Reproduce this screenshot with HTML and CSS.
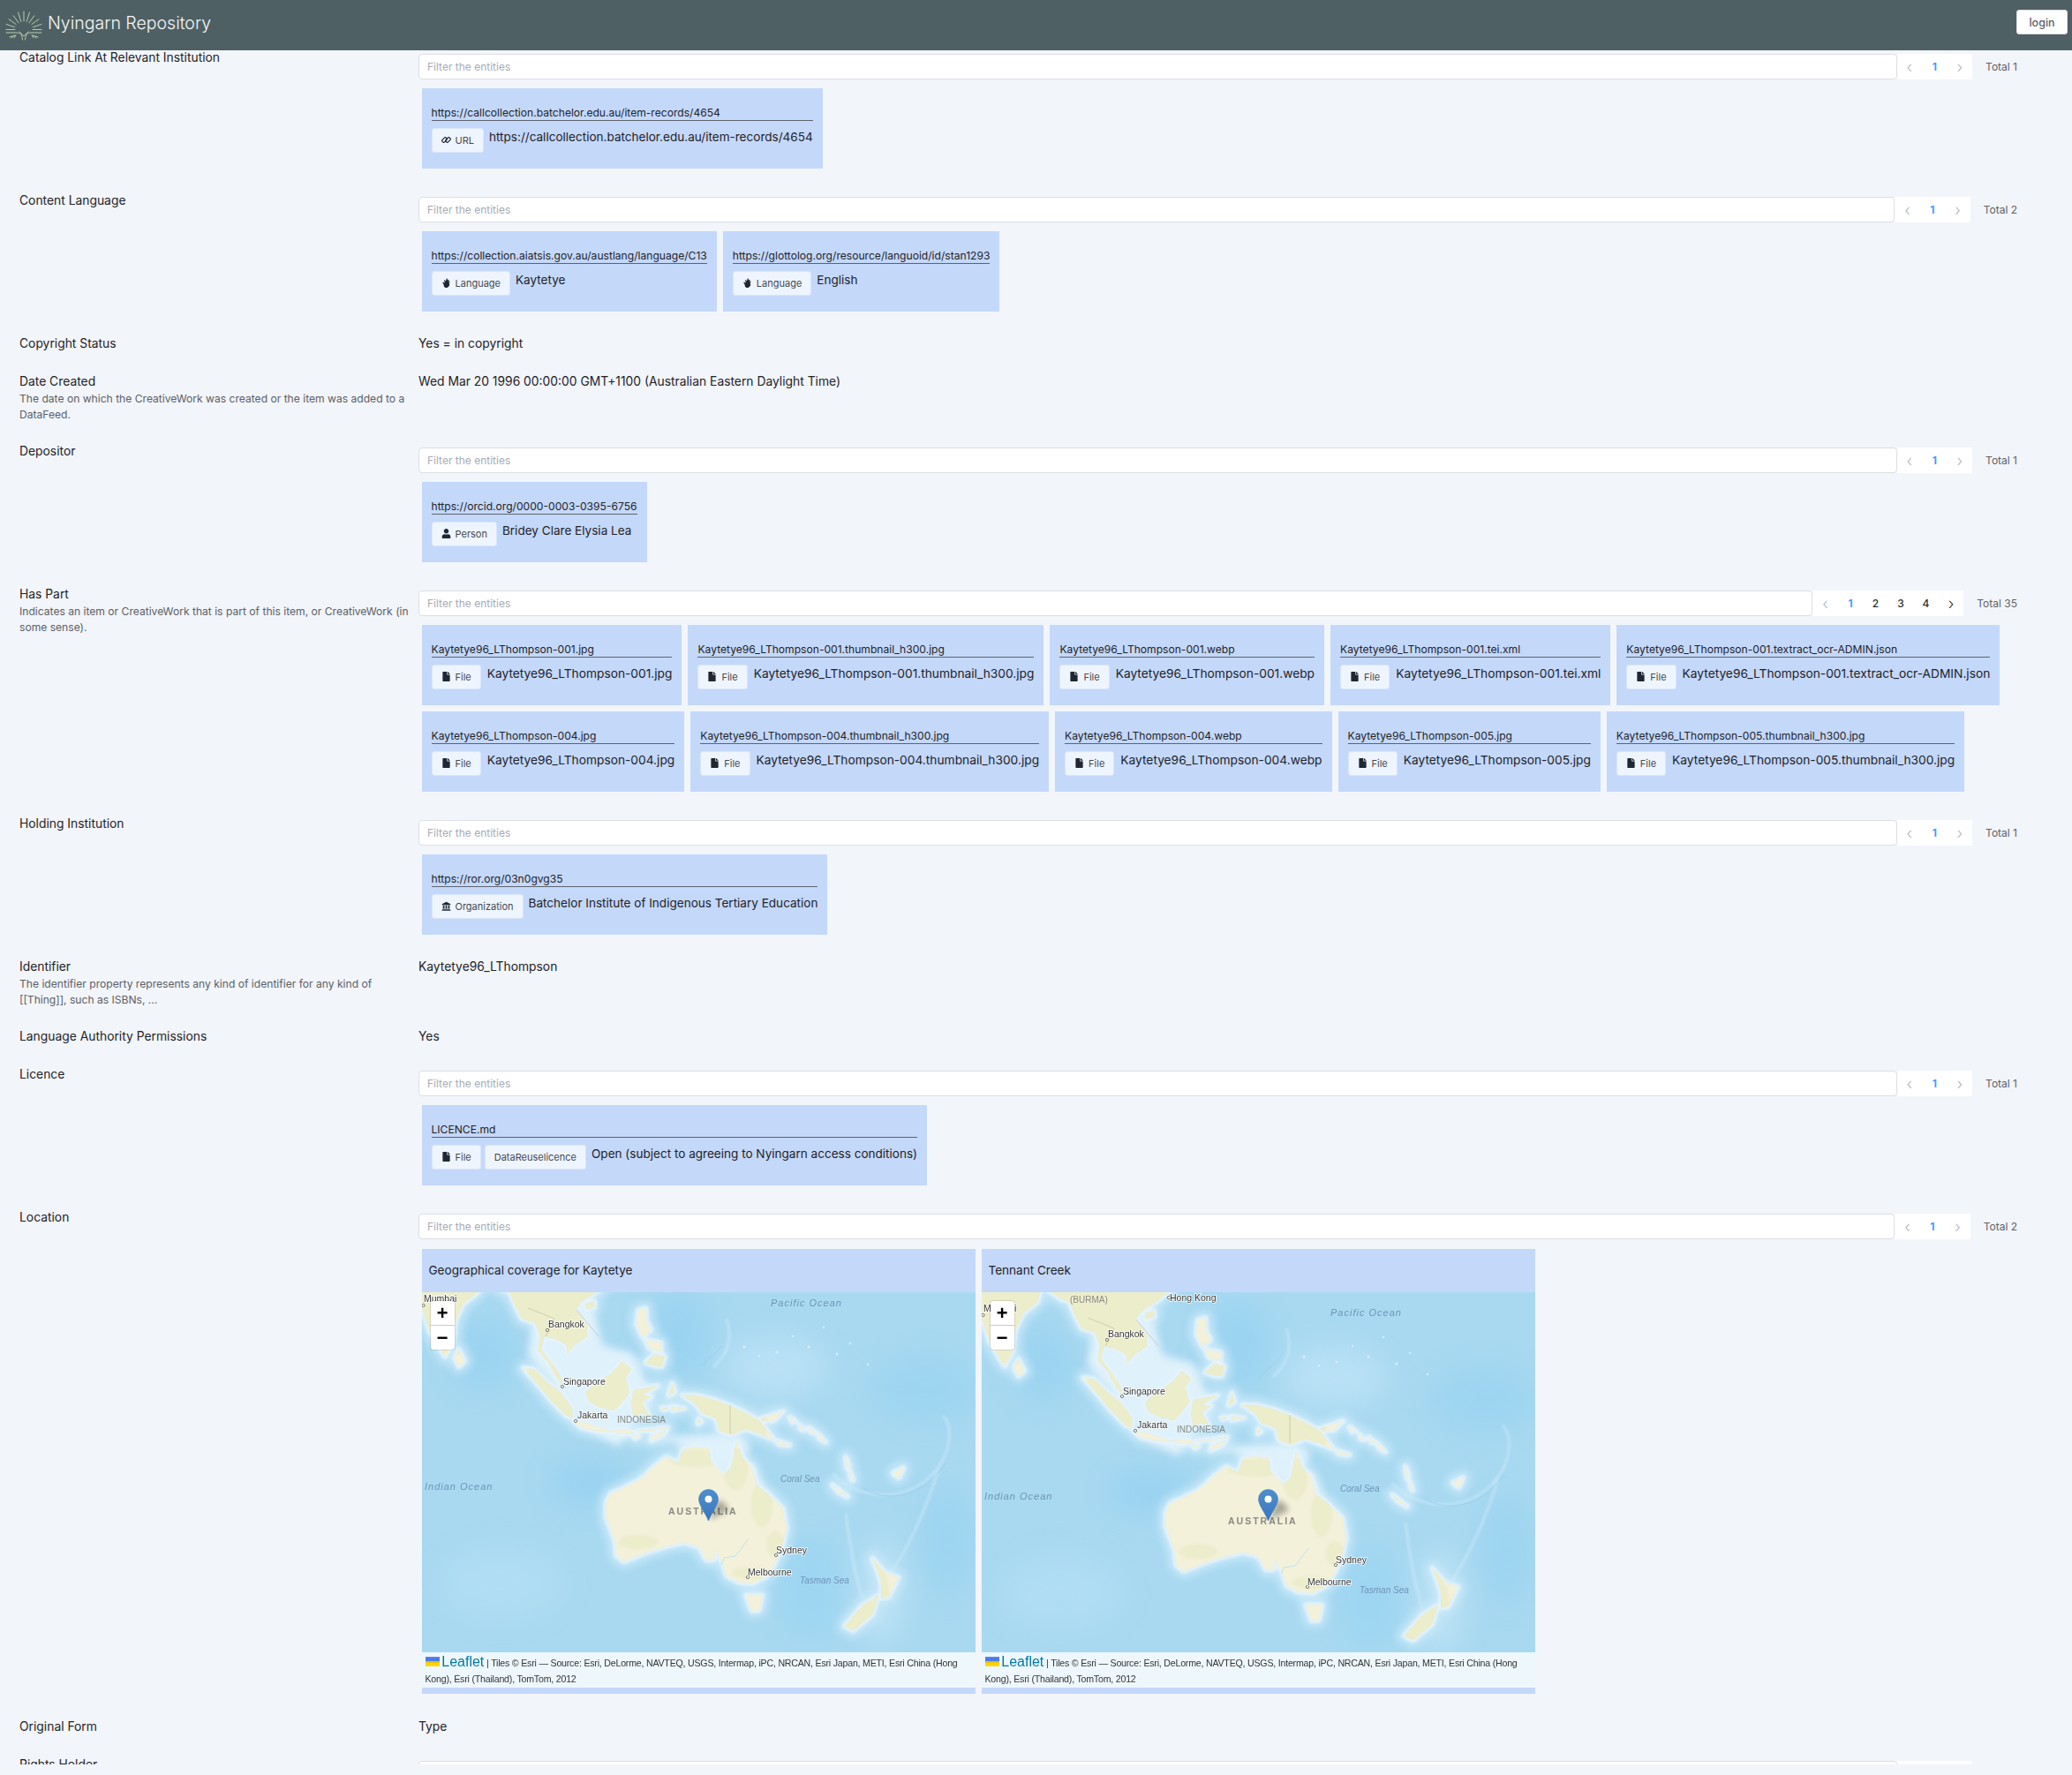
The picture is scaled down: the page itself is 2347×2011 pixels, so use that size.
FILE: index.html
```html
<!DOCTYPE html>
<html lang="en">
<head>
    <meta charset="UTF-8">
    <meta name="viewport" content="width=device-width, initial-scale=1.0">
    <title>Nyingarn Repository</title>
    <link rel="stylesheet" href="styles.css">
</head>
<body>
    <svg class="icon-defs" aria-hidden="true">
        <defs>
        <symbol id="i-file" viewBox="0 0 384 512"><path d="M224 136V0H24C10.7 0 0 10.7 0 24v464c0 13.3 10.7 24 24 24h336c13.3 0 24-10.7 24-24V160H248c-13.2 0-24-10.8-24-24zm160-14.1v6.1H256V0h6.1c6.4 0 12.5 2.5 17 7l97.9 98c4.5 4.5 7 10.6 7 16.9z"/></symbol>
        <symbol id="i-user" viewBox="0 0 448 512"><path d="M224 256c70.7 0 128-57.3 128-128S294.7 0 224 0 96 57.3 96 128s57.3 128 128 128zm89.6 32h-16.7c-22.2 10.2-46.9 16-72.9 16s-50.6-5.8-72.9-16h-16.7C60.2 288 0 348.2 0 422.4V464c0 26.5 21.5 48 48 48h352c26.5 0 48-21.5 48-48v-41.6c0-74.2-60.2-134.4-134.4-134.4z"/></symbol>
        <symbol id="i-link" viewBox="0 0 16 16"><g fill="none" stroke="currentColor" stroke-width="1.7"><rect x="0.6" y="5.4" width="9" height="5.4" rx="2.7" transform="rotate(-45 5 8)"/><rect x="6.4" y="5.2" width="9" height="5.4" rx="2.7" transform="rotate(-45 11 8)"/></g></symbol>
        <symbol id="i-lang" viewBox="0 0 16 16"><path d="M8.500 .5l1.500 1-.5 2 2-1 1 1.200-1.200 1.800 2-.5.700 1.300-1.500 1.700 1 2.500-1 3-3 2.500H7l-2.500-1.500L3.500 10 1.800 7.500l1-1 2 1.500.7-1.500L4 4l1.200-.8L7 5z"/></symbol>
        <symbol id="i-bank" viewBox="0 0 16 16"><path d="M8 1l7 3.600V6H1V4.600zM2.500 7H5v5H2.500zM6.800 7h2.400v5H6.800zM11 7h2.500v5H11zM1.500 12.800h13V14h-13zM.8 14.500h14.400V15.500H.8z"/></symbol>

        <g id="lands">
            <g transform="scale(.3333)">
                <path d="M-10 -40L200 -40L190 0L140 40L112 100L105 170L78 218L60 190L25 130L0 55L-10 40Z"/>
                <path d="M125 195L145 235L125 252L110 222Z"/>
                <path d="M225 -40L640 -40L600 -5L545 30L522 60L560 110L562 150L520 180L495 208L490 178L455 160L415 150L405 195L445 245L472 285L478 316L455 288L430 240L410 215L395 200L402 150L385 105L340 90L318 48L298 0L270 -10Z"/>
                <path d="M555 40L585 30L586 50L560 58Z"/>
                <path d="M345 258L380 262L430 310L470 340L510 392L512 428L490 420L440 370L390 310Z"/>
                <path d="M515 438L560 445L620 465L642 476L600 472L540 460Z"/>
                <path d="M640 470L700 468L720 478L680 482ZM712 484L738 490L725 498ZM780 490L830 472L812 490L778 505ZM730 470L800 465L790 472ZM800 462L835 460L825 467Z"/>
                <path d="M555 340L580 320L620 292L650 270L680 235L712 260L692 290L705 340L672 385L650 402L600 390L565 370Z"/>
                <path d="M720 332L802 318L748 350L778 355L748 375L772 420L745 412L720 424L710 380Z"/>
                <path d="M735 62L760 55L762 100L778 128L750 152L730 110ZM760 240L790 210L825 218L815 252L790 250ZM760 162L812 172L812 200L772 190Z"/>
                <path d="M850 310L860 340L838 352ZM848 388L892 395L850 402ZM815 392L838 394L820 400ZM940 430L950 440L938 448Z"/>
                <path d="M885 350L930 350L990 365L1045 385L1100 410L1150 440L1197 502L1150 482L1100 465L1050 485L1010 470L1000 430L950 410L930 380Z"/>
                <path d="M1150 430L1228 405L1196 436L1160 438Z"/>
                <path d="M1250 425L1272 440L1258 442ZM1285 452L1300 468L1288 466ZM1315 460L1340 480L1322 476ZM1345 480L1372 510L1350 498ZM1205 505L1250 520L1215 518Z"/>
                <path d="M1440 560L1452 590L1445 600ZM1455 610L1465 640L1458 635ZM1395 655L1442 692L1410 672Z"/>
            </g>
            <g transform="translate(182 175) scale(.3333)">
                <path d="M80 190L95 160L130 145L190 115L215 95L240 70L285 35L325 55L340 10L380 0L430 5L435 50L480 95L505 70L522 -18L545 40L575 70L590 130L630 160L680 210L692 280L675 350L650 400L625 440L575 465L530 460L490 440L475 395L450 350L445 385L420 385L395 340L345 325L280 340L215 360L140 390L115 370L110 320L80 240Z"/>
                <path d="M555 505L610 505L600 555L575 558Z"/>
                <path d="M985 380L1025 425L1072 445L1040 510L1015 515L1015 465L1005 430Z"/>
                <path d="M1005 505L985 570L920 625L890 610L950 540Z"/>
                <path d="M1055 90L1090 72L1075 105Z"/>
                <path d="M855 135L900 170L870 155Z"/>
            </g>
        </g>

        <filter id="soft" x="-20%" y="-20%" width="140%" height="140%" color-interpolation-filters="sRGB"><feGaussianBlur stdDeviation="5"/></filter>
        <filter id="softer" x="-30%" y="-30%" width="160%" height="160%" color-interpolation-filters="sRGB"><feGaussianBlur stdDeviation="16"/></filter>
        <filter id="thin" x="-20%" y="-20%" width="140%" height="140%" color-interpolation-filters="sRGB"><feGaussianBlur stdDeviation="1.500"/></filter>
        <filter id="pin-shadow" x="-50%" y="-50%" width="200%" height="200%" color-interpolation-filters="sRGB"><feGaussianBlur stdDeviation="3"/></filter>
        <mask id="land-only" maskUnits="userSpaceOnUse" x="-50" y="-50" width="800" height="600"><use href="#lands" fill="#fff"/></mask>
        <linearGradient id="pin-blue" x1="0" y1="0" x2="0" y2="1"><stop offset="0" stop-color="#4f8fcd"/><stop offset="1" stop-color="#3b74bd"/></linearGradient>

        <g id="basemap">
            <rect x="0" y="-20" width="627" height="480" fill="#a8d9f1"/>
            <g filter="url(#softer)">
                <ellipse cx="70" cy="70" rx="35" ry="40" fill="#9bd3f0"/>
                <ellipse cx="290" cy="50" rx="35" ry="50" fill="#9ad3f0"/>
                <ellipse cx="570" cy="110" rx="60" ry="35" fill="#9dd4f0"/>
                <ellipse cx="190" cy="215" rx="45" ry="25" fill="#99d2f0"/>
                <ellipse cx="440" cy="335" rx="35" ry="55" fill="#9dd5f1"/>
                <ellipse cx="595" cy="280" rx="30" ry="60" fill="#9dd4f0"/>
                <ellipse cx="400" cy="85" rx="60" ry="35" fill="#b9e0f5"/>
                <ellipse cx="90" cy="330" rx="70" ry="40" fill="#b0ddf3"/>
                <ellipse cx="520" cy="340" rx="25" ry="60" fill="#bde2f5"/>
            </g>
            <use href="#lands" fill="#c6e7f8" stroke="#c6e7f8" stroke-width="50" stroke-linejoin="round" filter="url(#soft)"/>
            <path d="M130 20L190 5L205 60L240 70L262 120L222 175L180 150L145 100L120 70Z" fill="#dff1fb" filter="url(#soft)"/>
            <path d="M250 165L345 160L372 170L355 205L325 200L290 172Z" fill="#dff1fb" filter="url(#soft)"/>
            <path d="M345 190L375 195L400 250L375 230Z" fill="#dff1fb" filter="url(#soft)"/>
            <use href="#lands" fill="#e4f3fc" stroke="#e4f3fc" stroke-width="18" stroke-linejoin="round" filter="url(#thin)"/>
            <g fill="none" stroke="#cfeafa" stroke-width="3" opacity=".6" filter="url(#thin)">
                <path d="M465 205C490 235 560 245 590 190C600 170 600 150 590 140"/>
                <path d="M585 200C570 250 550 290 530 320"/>
                <path d="M480 250C485 290 490 320 500 350"/>
                <path d="M345 30C355 60 340 75 330 85"/>
            </g>
            <g fill="none" stroke="#8cc6ea" stroke-width="1" opacity=".5">
                <path d="M500 222C525 238 565 235 592 195"/>
                <path d="M340 60C332 72 322 76 315 85"/>
            </g>
            <g fill="#d9eefa">
                <circle cx="365" cy="62" r="1.500"/><circle cx="382" cy="72" r="1.200"/><circle cx="402" cy="68" r="1.500"/>
                <circle cx="420" cy="50" r="1.200"/><circle cx="438" cy="62" r="1.500"/><circle cx="455" cy="40" r="1.200"/>
                <circle cx="470" cy="70" r="1.500"/><circle cx="485" cy="58" r="1.200"/><circle cx="505" cy="82" r="1.200"/>
            </g>
            <use href="#lands" fill="#f3f1da" stroke="#dedbb5" stroke-width=".6" stroke-linejoin="round"/>
            <g mask="url(#land-only)">
                <g filter="url(#thin)" fill="#e6e9c0" opacity=".55">
                    <rect x="-10" y="-30" width="125" height="100"/>
                    <rect x="115" y="-30" width="110" height="100"/>
                    <rect x="120" y="70" width="125" height="75"/>
                    <rect x="170" y="70" width="110" height="70"/>
                    <rect x="225" y="70" width="60" height="70"/>
                    <rect x="290" y="110" width="100" height="60"/>
                    <ellipse cx="310" cy="188" rx="32" ry="10"/>
                    <ellipse cx="355" cy="200" rx="14" ry="24"/>
                    <ellipse cx="385" cy="240" rx="12" ry="26"/>
                    <ellipse cx="400" cy="285" rx="10" ry="14"/>
                    <ellipse cx="245" cy="283" rx="22" ry="8"/>
                    <ellipse cx="375" cy="318" rx="24" ry="7"/>
                    <ellipse cx="490" cy="345" rx="40" ry="50"/>
                </g>
            </g>
            <g fill="none" stroke="#bcb99a" stroke-width=".6">
                <path d="M349 128L349 160"/>
                <path d="M120 18L150 30L140 50M175 20L200 50"/>
            </g>
            <path d="M370 279L355 299L342 301L339 309" fill="none" stroke="#bfe2f2" stroke-width="1"/>
            <g class="map-dots">
                <circle cx="1.500" cy="15" r="1.600"/>
                <circle cx="142" cy="43" r="1.600"/>
                <circle cx="159" cy="107" r="1.600"/>
                <circle cx="174" cy="146" r="1.600"/>
                <circle cx="401" cy="298" r="1.600"/>
                <circle cx="369" cy="323" r="1.600"/>
                <circle cx="212" cy="-5" r="1.600"/>
            </g>
        </g>

        <g id="marker">
            <path d="M326 258L348 247L342 238L334 236Z" fill="#000" opacity=".3" filter="url(#pin-shadow)"/>
            <path d="M324.500 259C320 248 313.500 241 313.500 234.500A11 11 0 0 1 335.500 234.500C335.500 241 329 248 324.500 259Z" fill="url(#pin-blue)" stroke="#3a72b6" stroke-width=".5"/>
            <circle cx="324.500" cy="234.500" r="4" fill="#fff"/>
        </g>
        </defs>
    </svg>

    <header class="topbar">
        <a class="brand" href="#">
            <svg class="brand-logo" viewBox="0 0 54 44" width="54" height="44" aria-hidden="true">
                <g fill="none" stroke="#b9cba8" stroke-width="1" stroke-linecap="round">
                    <path d="M27 9V20M33.500 10L30.100 20.500M20.500 10L23.900 20.500M38.800 13.800L32.900 21.900M15.200 13.800L21.100 21.900M44 17.700L35.900 23.500M10 17.700L18.100 23.500M47 23.500L37.500 26.600M7 23.500L16.500 26.600M7 29.500L17 29.500M37 29.500L47 29.500"/>
                    <path d="M7 33H19C23 33 25 35 25.500 41M47 33H35C31 33 29 35 28.500 41M22 32L27 37L32 32"/>
                    <path d="M11 38L18 36M13 39L15 36.500M16 39L17.500 36.500M43 38L36 36M41 39L39 36.500M38 39L36.500 36.500"/>
                </g>
            </svg>
            <span class="brand-name">Nyingarn Repository</span>
        </a>
        <button class="login" type="button">login</button>
    </header>

    <main class="content">
        <div class="row">
            <div class="row-label">Catalog Link At Relevant Institution</div>
            <div class="entity">
                <div class="entity-bar">
                    <input class="filter" type="text" placeholder="Filter the entities">
                    <div class="pager"><span class="nav">&#8249;</span><span class="num active">1</span><span class="nav">&#8250;</span></div>
                    <span class="total">Total 1</span>
                </div>
                <div class="cards">
                    <div class="card">
                        <a class="card-link" href="#">https://callcollection.batchelor.edu.au/item-records/4654</a>
                        <div class="card-body">
                            <span class="chip"><svg class="chip-icon"><use href="#i-link"/></svg>URL</span>
                            <span class="card-name">https://callcollection.batchelor.edu.au/item-records/4654</span>
                        </div>
                    </div>
                </div>
            </div>
        </div>

        <div class="row">
            <div class="row-label">Content Language</div>
            <div class="entity">
                <div class="entity-bar">
                    <input class="filter" type="text" placeholder="Filter the entities">
                    <div class="pager"><span class="nav">&#8249;</span><span class="num active">1</span><span class="nav">&#8250;</span></div>
                    <span class="total">Total 2</span>
                </div>
                <div class="cards">
                    <div class="card">
                        <a class="card-link" href="#">https://collection.aiatsis.gov.au/austlang/language/C13</a>
                        <div class="card-body">
                            <span class="chip"><svg class="chip-icon"><use href="#i-lang"/></svg>Language</span>
                            <span class="card-name">Kaytetye</span>
                        </div>
                    </div>
                    <div class="card">
                        <a class="card-link" href="#">https://glottolog.org/resource/languoid/id/stan1293</a>
                        <div class="card-body">
                            <span class="chip"><svg class="chip-icon"><use href="#i-lang"/></svg>Language</span>
                            <span class="card-name">English</span>
                        </div>
                    </div>
                </div>
            </div>
        </div>

        <div class="row">
            <div class="row-label">Copyright Status</div>
            <div class="row-value">Yes = in copyright</div>
        </div>

        <div class="row">
            <div class="row-label">Date Created
                <p class="row-help">The date on which the CreativeWork was created or the item was added to a DataFeed.</p>
            </div>
            <div class="row-value">Wed Mar 20 1996 00:00:00 GMT+1100 (Australian Eastern Daylight Time)</div>
        </div>

        <div class="row">
            <div class="row-label">Depositor</div>
            <div class="entity">
                <div class="entity-bar">
                    <input class="filter" type="text" placeholder="Filter the entities">
                    <div class="pager"><span class="nav">&#8249;</span><span class="num active">1</span><span class="nav">&#8250;</span></div>
                    <span class="total">Total 1</span>
                </div>
                <div class="cards">
                    <div class="card">
                        <a class="card-link" href="#">https://orcid.org/0000-0003-0395-6756</a>
                        <div class="card-body">
                            <span class="chip"><svg class="chip-icon"><use href="#i-user"/></svg>Person</span>
                            <span class="card-name">Bridey Clare Elysia Lea</span>
                        </div>
                    </div>
                </div>
            </div>
        </div>

        <div class="row">
            <div class="row-label">Has Part
                <p class="row-help">Indicates an item or CreativeWork that is part of this item, or CreativeWork (in some sense).</p>
            </div>
            <div class="entity">
                <div class="entity-bar">
                    <input class="filter" type="text" placeholder="Filter the entities">
                    <div class="pager"><span class="nav">&#8249;</span><span class="num active">1</span><span class="num">2</span><span class="num">3</span><span class="num">4</span><span class="nav dark">&#8250;</span></div>
                    <span class="total">Total 35</span>
                </div>
                <div class="cards files">
                    <div class="card"><a class="card-link" href="#">Kaytetye96_LThompson-001.jpg</a><div class="card-body"><span class="chip"><svg class="chip-icon"><use href="#i-file"/></svg>File</span><span class="card-name">Kaytetye96_LThompson-001.jpg</span></div></div>
                    <div class="card"><a class="card-link" href="#">Kaytetye96_LThompson-001.thumbnail_h300.jpg</a><div class="card-body"><span class="chip"><svg class="chip-icon"><use href="#i-file"/></svg>File</span><span class="card-name">Kaytetye96_LThompson-001.thumbnail_h300.jpg</span></div></div>
                    <div class="card"><a class="card-link" href="#">Kaytetye96_LThompson-001.webp</a><div class="card-body"><span class="chip"><svg class="chip-icon"><use href="#i-file"/></svg>File</span><span class="card-name">Kaytetye96_LThompson-001.webp</span></div></div>
                    <div class="card"><a class="card-link" href="#">Kaytetye96_LThompson-001.tei.xml</a><div class="card-body"><span class="chip"><svg class="chip-icon"><use href="#i-file"/></svg>File</span><span class="card-name">Kaytetye96_LThompson-001.tei.xml</span></div></div>
                    <div class="card"><a class="card-link" href="#">Kaytetye96_LThompson-001.textract_ocr-ADMIN.json</a><div class="card-body"><span class="chip"><svg class="chip-icon"><use href="#i-file"/></svg>File</span><span class="card-name">Kaytetye96_LThompson-001.textract_ocr-ADMIN.json</span></div></div>
                    <div class="card"><a class="card-link" href="#">Kaytetye96_LThompson-004.jpg</a><div class="card-body"><span class="chip"><svg class="chip-icon"><use href="#i-file"/></svg>File</span><span class="card-name">Kaytetye96_LThompson-004.jpg</span></div></div>
                    <div class="card"><a class="card-link" href="#">Kaytetye96_LThompson-004.thumbnail_h300.jpg</a><div class="card-body"><span class="chip"><svg class="chip-icon"><use href="#i-file"/></svg>File</span><span class="card-name">Kaytetye96_LThompson-004.thumbnail_h300.jpg</span></div></div>
                    <div class="card"><a class="card-link" href="#">Kaytetye96_LThompson-004.webp</a><div class="card-body"><span class="chip"><svg class="chip-icon"><use href="#i-file"/></svg>File</span><span class="card-name">Kaytetye96_LThompson-004.webp</span></div></div>
                    <div class="card"><a class="card-link" href="#">Kaytetye96_LThompson-005.jpg</a><div class="card-body"><span class="chip"><svg class="chip-icon"><use href="#i-file"/></svg>File</span><span class="card-name">Kaytetye96_LThompson-005.jpg</span></div></div>
                    <div class="card"><a class="card-link" href="#">Kaytetye96_LThompson-005.thumbnail_h300.jpg</a><div class="card-body"><span class="chip"><svg class="chip-icon"><use href="#i-file"/></svg>File</span><span class="card-name">Kaytetye96_LThompson-005.thumbnail_h300.jpg</span></div></div>
                </div>
            </div>
        </div>

        <div class="row">
            <div class="row-label">Holding Institution</div>
            <div class="entity">
                <div class="entity-bar">
                    <input class="filter" type="text" placeholder="Filter the entities">
                    <div class="pager"><span class="nav">&#8249;</span><span class="num active">1</span><span class="nav">&#8250;</span></div>
                    <span class="total">Total 1</span>
                </div>
                <div class="cards">
                    <div class="card">
                        <a class="card-link" href="#">https://ror.org/03n0gvg35</a>
                        <div class="card-body">
                            <span class="chip"><svg class="chip-icon"><use href="#i-bank"/></svg>Organization</span>
                            <span class="card-name">Batchelor Institute of Indigenous Tertiary Education</span>
                        </div>
                    </div>
                </div>
            </div>
        </div>

        <div class="row">
            <div class="row-label">Identifier
                <p class="row-help">The identifier property represents any kind of identifier for any kind of [[Thing]], such as ISBNs, ...</p>
            </div>
            <div class="row-value">Kaytetye96_LThompson</div>
        </div>

        <div class="row">
            <div class="row-label">Language Authority Permissions</div>
            <div class="row-value">Yes</div>
        </div>

        <div class="row">
            <div class="row-label">Licence</div>
            <div class="entity">
                <div class="entity-bar">
                    <input class="filter" type="text" placeholder="Filter the entities">
                    <div class="pager"><span class="nav">&#8249;</span><span class="num active">1</span><span class="nav">&#8250;</span></div>
                    <span class="total">Total 1</span>
                </div>
                <div class="cards">
                    <div class="card">
                        <a class="card-link" href="#">LICENCE.md</a>
                        <div class="card-body">
                            <span class="chip"><svg class="chip-icon"><use href="#i-file"/></svg>File</span>
                            <span class="chip">DataReuselicence</span>
                            <span class="card-name">Open (subject to agreeing to Nyingarn access conditions)</span>
                        </div>
                    </div>
                </div>
            </div>
        </div>

        <div class="row">
            <div class="row-label">Location</div>
            <div class="entity">
                <div class="entity-bar">
                    <input class="filter" type="text" placeholder="Filter the entities">
                    <div class="pager"><span class="nav">&#8249;</span><span class="num active">1</span><span class="nav">&#8250;</span></div>
                    <span class="total">Total 2</span>
                </div>
                <div class="cards">
                    <div class="geo-card">
                        <div class="geo-title">Geographical coverage for Kaytetye</div>
                        <div class="map">
                            <svg class="map-svg" viewBox="0 0 627 448">
                                <use href="#basemap"/>
                                <g class="map-places">
                                    <text x="2" y="11">Mumbai</text>
                                    <text x="143" y="40">Bangkok</text>
                                    <text x="160" y="105">Singapore</text>
                                    <text x="176" y="143">Jakarta</text>
                                    <text x="401" y="296">Sydney</text>
                                    <text x="369" y="321">Melbourne</text>
                                </g>
                                <g class="map-countries">
                                    <text x="221" y="148">INDONESIA</text>
                                    <text class="map-big" x="279" y="252">AUSTRALIA</text>
                                </g>
                                <g class="map-seas">
                                    <text class="map-wide" x="395" y="16">Pacific Ocean</text>
                                    <text class="map-wide" x="3" y="224">Indian Ocean</text>
                                    <text x="406" y="215">Coral Sea</text>
                                    <text x="428" y="330">Tasman Sea</text>
                                </g>
                                <use href="#marker"/>
                            </svg>
                            <div class="zoom-ctl"><a href="#">+</a><a href="#">&minus;</a></div>
                            <div class="attribution"><svg class="flag" viewBox="0 0 12 8"><rect width="12" height="4" fill="#4c7be1"/><rect y="4" width="12" height="4" fill="#ffd500"/><rect y="4" width="12" height="1" fill="#e0bc00"/></svg> <a href="#">Leaflet</a> | Tiles &copy; Esri &mdash; Source: Esri, DeLorme, NAVTEQ, USGS, Intermap, iPC, NRCAN, Esri Japan, METI, Esri China (Hong Kong), Esri (Thailand), TomTom, 2012</div>
                        </div>
                    </div>
                    <div class="geo-card">
                        <div class="geo-title">Tennant Creek</div>
                        <div class="map">
                            <svg class="map-svg" viewBox="0 0 627 448">
                                <use href="#basemap" y="11"/>
                                <g transform="translate(0 11)">
                                    <g class="map-places">
                                        <text x="2" y="11">Mumbai</text>
                                        <text x="143" y="40">Bangkok</text>
                                        <text x="160" y="105">Singapore</text>
                                        <text x="176" y="143">Jakarta</text>
                                        <text x="401" y="296">Sydney</text>
                                        <text x="369" y="321">Melbourne</text>
                                        <text x="213" y="-1.500">Hong Kong</text>
                                    </g>
                                    <g class="map-countries">
                                        <text x="100" y="1">(BURMA)</text>
                                        <text x="221" y="148">INDONESIA</text>
                                        <text class="map-big" x="279" y="252">AUSTRALIA</text>
                                    </g>
                                    <g class="map-seas">
                                        <text class="map-wide" x="395" y="16">Pacific Ocean</text>
                                        <text class="map-wide" x="3" y="224">Indian Ocean</text>
                                        <text x="406" y="215">Coral Sea</text>
                                        <text x="428" y="330">Tasman Sea</text>
                                    </g>
                                </g>
                                <use href="#marker"/>
                            </svg>
                            <div class="zoom-ctl"><a href="#">+</a><a href="#">&minus;</a></div>
                            <div class="attribution"><svg class="flag" viewBox="0 0 12 8"><rect width="12" height="4" fill="#4c7be1"/><rect y="4" width="12" height="4" fill="#ffd500"/><rect y="4" width="12" height="1" fill="#e0bc00"/></svg> <a href="#">Leaflet</a> | Tiles &copy; Esri &mdash; Source: Esri, DeLorme, NAVTEQ, USGS, Intermap, iPC, NRCAN, Esri Japan, METI, Esri China (Hong Kong), Esri (Thailand), TomTom, 2012</div>
                        </div>
                    </div>
                </div>
            </div>
        </div>

        <div class="row">
            <div class="row-label">Original Form</div>
            <div class="row-value">Type</div>
        </div>

        <div class="row">
            <div class="row-label">Rights Holder</div>
            <div class="entity">
                <div class="entity-bar">
                    <input class="filter" type="text" placeholder="Filter the entities">
                    <div class="pager"><span class="nav">&#8249;</span><span class="num active">1</span><span class="nav">&#8250;</span></div>
                    <span class="total">Total 1</span>
                </div>
            </div>
        </div>
    </main>
</body>
</html>
```
FILE: styles.css
```css
html, body {
    margin: 0;
    height: 2011px;
    overflow: hidden;
}

body {
    font-family: Inter, "Noto Sans", sans-serif;
    font-size: 13.85px;
    line-height: 20px;
    color: #1f2328;
    background-color: #f2f5fa;
}

.icon-defs {
    position: absolute;
    width: 0;
    height: 0;
}

/* header */
.topbar {
    height: 57px;
    display: flex;
    align-items: flex-start;
    justify-content: space-between;
    padding: 0 5px 0 0;
    background-color: #4f6064;
}

.brand {
    display: flex;
    align-items: center;
    height: 52px;
    text-decoration: none;
}

.brand-name {
    font-size: 19.5px;
    font-weight: 300;
    color: #f3f5f4;
}

.login {
    width: 58px;
    height: 28px;
    margin-top: 11px;
    padding: 0;
    border: 1px solid #dcdfe6;
    border-radius: 3px;
    background-color: #fff;
    color: #606266;
    font-family: inherit;
    font-size: 12.5px;
    font-weight: 500;
}

/* rows */
.content {
    height: 1944px;
    overflow: hidden;
    box-sizing: border-box;
    padding: 0 62px 0 22px;
    margin-top: -2px;
}

.row {
    display: grid;
    grid-template-columns: 452px 1fr;
    padding-bottom: 23px;
}

.row-label {
    padding-right: 8px;
}

.row-help {
    margin: 1px 0 -1px;
    font-size: 12.1px;
    line-height: 18px;
    color: #5c6066;
}

/* linked entities */
.entity {
    margin-top: 6px;
    min-width: 0;
}

.entity-bar {
    display: flex;
    align-items: center;
}

.filter {
    flex: 1;
    min-width: 0;
    height: 29px;
    box-sizing: border-box;
    padding: 0 9px;
    border: 1px solid #dcdfe6;
    border-radius: 4px;
    background-color: #fff;
    font-family: inherit;
    font-size: 12px;
}

.filter::placeholder {
    color: #a8abb2;
}

.pager {
    display: flex;
}

.pager span {
    width: 28.5px;
    height: 29px;
    display: flex;
    align-items: center;
    justify-content: center;
    background-color: #fff;
    font-size: 12px;
    font-weight: 500;
    color: #303133;
}

.pager .nav {
    font-size: 18px;
    font-weight: 300;
    color: #b5b8bf;
}

.pager .dark {
    color: #303133;
}

.pager .active {
    font-weight: 700;
    color: #409eff;
}

.total {
    margin-left: 15px;
    font-size: 12px;
    color: #606266;
}

.cards {
    display: flex;
    flex-wrap: wrap;
    margin-top: 6px;
}

.card {
    margin: 3.5px;
    padding: 18px 11px 18px;
    background-color: #c4d8fa;
}

.card-link {
    display: block;
    height: 18px;
    line-height: 20px;
    font-size: 12.1px;
    color: #1f2328;
    text-decoration: none;
    border-bottom: 1px solid #5f646c;
}

.card-body {
    display: flex;
    align-items: flex-start;
    gap: 4px;
    margin-top: 8px;
}

.chip {
    display: inline-flex;
    align-items: center;
    height: 28px;
    box-sizing: border-box;
    padding: 0 10px;
    border: 1px solid #d9e6fb;
    border-radius: 3px;
    background-color: #eff5ff;
    font-size: 11px;
    color: #444a52;
    white-space: nowrap;
}

.chip-icon {
    width: 11px;
    height: 11px;
    margin-right: 5px;
    fill: #1f2733;
    color: #1f2733;
}

.card-name {
    margin-left: 2px;
    font-size: 13.55px;
    white-space: nowrap;
}

.files .card-name {
    margin-left: 3px;
    font-size: 13.75px;
}

/* location maps */
.geo-card {
    width: 627px;
    margin: 5px 3.5px 3.5px;
    padding-bottom: 7px;
    background-color: #c4d8fa;
}

.geo-title {
    height: 49px;
    padding: 0 8px;
    line-height: 49px;
    font-size: 13.55px;
}

.map {
    position: relative;
    height: 448px;
    overflow: hidden;
}

.map-svg {
    display: block;
    width: 627px;
    height: 448px;
}

.map-svg text {
    font-family: "Liberation Sans", sans-serif;
}

.map-places text {
    font-size: 10.5px;
    fill: #333;
    stroke: #fff;
    stroke-width: 1.5px;
    paint-order: stroke;
}

.map-dots circle {
    fill: #fff;
    stroke: #444;
    stroke-width: .7px;
}

.map-countries text {
    font-size: 10px;
    fill: #8a8a84;
}

.map-countries .map-big {
    font-size: 10.5px;
    font-weight: 700;
    letter-spacing: 2px;
}

.map-seas text {
    font-size: 10px;
    font-style: italic;
    fill: #6f93b8;
}

.map-seas .map-wide {
    font-size: 11px;
    letter-spacing: 1px;
}

.zoom-ctl {
    position: absolute;
    top: 10px;
    left: 10px;
    width: 27px;
    border-radius: 3px;
    background-color: #fff;
    box-shadow: 0 0 0 1px rgba(0, 0, 0, .1);
}

.zoom-ctl a {
    display: block;
    height: 27px;
    line-height: 32px;
    overflow: hidden;
    text-align: center;
    font-family: "Liberation Mono", monospace;
    font-size: 22px;
    font-weight: 700;
    color: #000;
    text-decoration: none;
}

.zoom-ctl a:first-child {
    border-bottom: 1px solid #ccc;
}

.attribution {
    position: absolute;
    left: 0;
    right: 0;
    bottom: 0;
    height: 40px;
    box-sizing: border-box;
    padding: 2px 4px;
    background-color: rgba(255, 255, 255, .8);
    font-family: "Liberation Sans", sans-serif;
    font-size: 10.6px;
    letter-spacing: -.2px;
    line-height: 18px;
    color: #333;
}

.attribution a {
    font-size: 16px;
    letter-spacing: 0;
    color: #0078a8;
    text-decoration: none;
}

.flag {
    width: 16px;
    height: 11px;
}
```
